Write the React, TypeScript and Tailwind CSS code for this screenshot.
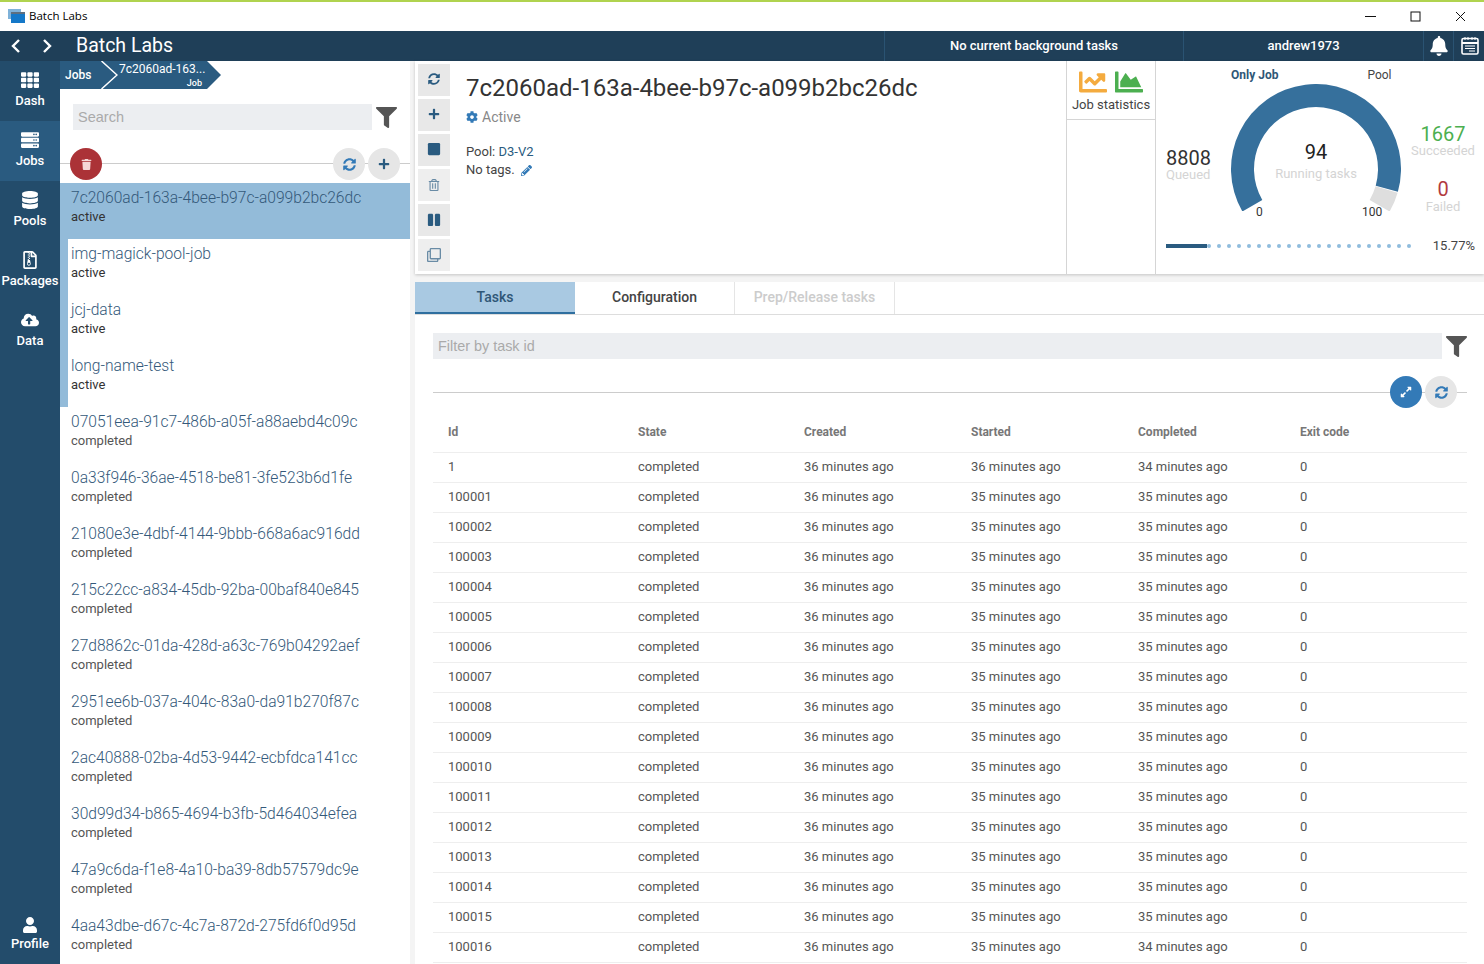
import React from 'react';
import {
  FaBell, FaChartArea, FaChartLine, FaCloudUploadAlt, FaCog, FaDatabase, FaExpandAlt,
  FaFilter, FaPause, FaPencilAlt, FaPlus, FaRegClone, FaRegFileArchive, FaRegTrashAlt, FaServer, FaStop, FaSyncAlt,
  FaTh, FaTrash, FaUser,
} from 'react-icons/fa';

const navItems = [
  { label: 'Dash', icon: FaTh },
  { label: 'Jobs', icon: FaServer, active: true },
  { label: 'Pools', icon: FaDatabase },
  { label: 'Packages', icon: FaRegFileArchive },
  { label: 'Data', icon: FaCloudUploadAlt },
];

const jobs = [
  { id: '7c2060ad-163a-4bee-b97c-a099b2bc26dc', state: 'active' },
  { id: 'img-magick-pool-job', state: 'active' },
  { id: 'jcj-data', state: 'active' },
  { id: 'long-name-test', state: 'active' },
  { id: '07051eea-91c7-486b-a05f-a88aebd4c09c', state: 'completed' },
  { id: '0a33f946-36ae-4518-be81-3fe523b6d1fe', state: 'completed' },
  { id: '21080e3e-4dbf-4144-9bbb-668a6ac916dd', state: 'completed' },
  { id: '215c22cc-a834-45db-92ba-00baf840e845', state: 'completed' },
  { id: '27d8862c-01da-428d-a63c-769b04292aef', state: 'completed' },
  { id: '2951ee6b-037a-404c-83a0-da91b270f87c', state: 'completed' },
  { id: '2ac40888-02ba-4d53-9442-ecbfdca141cc', state: 'completed' },
  { id: '30d99d34-b865-4694-b3fb-5d464034efea', state: 'completed' },
  { id: '47a9c6da-f1e8-4a10-ba39-8db57579dc9e', state: 'completed' },
  { id: '4aa43dbe-d67c-4c7a-872d-275fd6f0d95d', state: 'completed' },
];

const tasks = ['1', ...Array.from({ length: 16 }, (_, i) => String(100001 + i))].map((id) => ({
  id,
  started: id === '1' ? '36 minutes ago' : '35 minutes ago',
  completed: id === '1' || id === '100016' ? '34 minutes ago' : '35 minutes ago',
}));

const actions = [
  { icon: FaSyncAlt, size: 'text-[12px] pb-[2px]' },
  { icon: FaPlus, size: 'text-[12px] pb-[2px]' },
  { icon: FaStop, size: 'text-[14px] pb-[2px]' },
  { icon: FaRegTrashAlt, size: 'text-[12px] opacity-70' },
  { icon: FaPause, size: 'text-[14px]' },
  { icon: FaRegClone, size: 'text-[14px] opacity-70' },
];

// point on the gauge, angle in degrees clockwise from the left end of the horizontal axis
const polar = (deg: number, r: number) => {
  const a = (deg * Math.PI) / 180;
  return `${(85 - r * Math.cos(a)).toFixed(2)} ${(85 - r * Math.sin(a)).toFixed(2)}`;
};

const arc = (from: number, to: number) => {
  const large = to - from > 180 ? 1 : 0;
  return `M${polar(from, 85)} A85 85 0 ${large} 1 ${polar(to, 85)} L${polar(to, 62)} A62 62 0 ${large} 0 ${polar(from, 62)} Z`;
};

const NotesIcon = () => (
  <svg width="20" height="20" viewBox="0 0 20 20" fill="none">
    <rect x="2" y="2.5" width="16" height="15.5" rx="1.5" stroke="white" strokeWidth="1.6" />
    <path d="M2 7h16" stroke="white" strokeWidth="2" />
    <path d="M5 1v3M8 1v3M12 1v3M15 1v3" stroke="white" strokeWidth="1" />
    <path d="M5 10h10M5 12.5h10M9 15h6" stroke="white" strokeWidth="1.2" />
  </svg>
);

const AppIcon = () => (
  <svg width="17" height="15" viewBox="0 0 17 15">
    <rect x="0" y="0" width="13" height="10" fill="#7fb2d9" />
    <rect x="3" y="3" width="14" height="11" fill="#1578c8" />
    <rect x="3" y="3" width="14" height="2" fill="#5d6f80" />
  </svg>
);

const TitleBar = () => (
  <div className="flex h-[31px] shrink-0 items-center border-t-2 border-[#b0d34f] bg-white pl-2">
    <AppIcon />
    <span className="mb-[2px] ml-1 font-['Open_Sans',sans-serif] text-[11.5px] text-black">Batch Labs</span>
    <div className="ml-auto flex h-full items-center pr-[1px]">
      <button className="flex w-[45px] justify-center">
        <svg width="11" height="11" viewBox="0 0 11 11"><path d="M0 5.5h11" stroke="#111" /></svg>
      </button>
      <button className="flex w-[45px] justify-center">
        <svg width="11" height="11" viewBox="0 0 11 11"><rect x="1" y="1" width="9" height="9" fill="none" stroke="#111" /></svg>
      </button>
      <button className="flex w-[45px] justify-center">
        <svg width="11" height="11" viewBox="0 0 11 11"><path d="M1 1l9 9M10 1l-9 9" stroke="#111" /></svg>
      </button>
    </div>
  </div>
);

const HeaderBar = () => (
  <div className="flex h-[30px] shrink-0 items-center bg-[#1f3f58] text-white">
    <div className="flex w-[76px] items-center gap-[23px] pl-[11px]">
      <svg width="9" height="14" viewBox="0 0 9 14"><path d="M8 1L2 7l6 6" fill="none" stroke="white" strokeWidth="2.4" /></svg>
      <svg width="9" height="14" viewBox="0 0 9 14"><path d="M1 1l6 6-6 6" fill="none" stroke="white" strokeWidth="2.4" /></svg>
    </div>
    <span className="w-[808px] text-[19.5px]">Batch Labs</span>
    <div className="flex h-full w-[300px] items-center justify-center border-x border-[#2a5372] text-[13px] font-medium">
      No current background tasks
    </div>
    <div className="flex h-full w-[240px] items-center justify-center border-r border-[#2a5372] text-[13px] font-medium">
      andrew1973
    </div>
    <div className="flex h-full w-[30px] items-center justify-center border-r border-[#2a5372]">
      <FaBell className="text-[20px]" />
    </div>
    <div className="flex flex-1 items-center justify-center pl-[2px]">
      <NotesIcon />
    </div>
  </div>
);

const SideNav = () => (
  <nav className="flex w-[60px] shrink-0 flex-col bg-[#234c6b] text-white">
    {navItems.map(({ label, icon: Icon, active }) => (
      <div
        key={label}
        className={`flex h-[60px] flex-col items-center pt-[10px] ${active ? 'bg-[#2a5b80]' : ''}`}
      >
        <Icon className="text-[18px]" />
        <span className="mt-[3px] text-[13px] font-medium leading-[18px]">{label}</span>
      </div>
    ))}
    <div className="mt-auto flex h-[47px] flex-col items-center">
      <FaUser className="text-[16px]" />
      <span className="mt-[2px] text-[13px] font-medium leading-[18px]">Profile</span>
    </div>
  </nav>
);

const Breadcrumb = () => (
  <div className="flex h-[28px] w-[161px] shrink-0 items-stretch bg-[#2a5b80] text-white [clip-path:polygon(0_0,147px_0,161px_14px,147px_28px,0_28px)]">
    <span className="flex w-[41px] items-center pl-[5px] text-xs font-medium">Jobs</span>
    <svg width="17" height="28" viewBox="0 0 17 28" className="shrink-0">
      <path d="M0.5 0L16 14L0.5 28" fill="none" stroke="white" strokeWidth="1.5" />
    </svg>
    <div className="flex w-[86px] flex-col pt-[1px]">
      <span className="whitespace-nowrap pl-[1px] text-xs leading-[14px]">7c2060ad-163...</span>
      <span className="pr-[2px] text-right text-[9px] font-medium leading-[14px]">Job</span>
    </div>
  </div>
);

const JobList = () => (
  <section className="flex w-[350px] shrink-0 flex-col overflow-hidden bg-white">
    <Breadcrumb />
    <div className="mt-[15px] flex items-center pl-[13px]">
      <div className="flex h-[26px] w-[299px] items-center bg-[#eceef1] pl-[5px] pt-[1px] font-['Liberation_Sans',sans-serif] text-[14.5px] text-[#aaa]">Search</div>
      <FaFilter className="ml-[4px] text-[21px] text-[#555]" />
    </div>
    <div className="relative mt-[16px] flex h-[36px] shrink-0 items-center pl-[10px] pr-[10px]">
      <div className="absolute inset-x-0 top-[17px] h-px bg-[#ccc]" />
      <button className="relative flex h-8 w-8 items-center justify-center rounded-full bg-[#ab3237] text-[11px] text-[#f5d8d8]">
        <FaTrash />
      </button>
      <button className="relative ml-auto flex h-8 w-8 items-center justify-center rounded-full bg-[#e6e6e6] text-[13px] text-[#337ab7]">
        <FaSyncAlt />
      </button>
      <button className="relative ml-[3px] flex h-8 w-8 items-center justify-center rounded-full bg-[#e6e6e6] text-[12px] text-[#2a5b80]">
        <FaPlus />
      </button>
    </div>
    <div className="mt-[1px]">
      {jobs.map((job, i) => (
        <div
          key={job.id}
          className={`h-[56px] border-l-[8px] pl-[3px] pt-[6px] ${job.state === 'active' ? 'border-[#93bbd9]' : 'border-transparent'} ${i === 0 ? 'bg-[#93bbd9]' : ''}`}
        >
          <div className="text-[15.6px] font-light leading-[19px] text-[#34597a]">{job.id}</div>
          <div className={`text-[13px] leading-[18px] ${job.state === 'active' ? 'text-[#333]' : 'text-[#555]'}`}>{job.state}</div>
        </div>
      ))}
    </div>
  </section>
);

const Gauge = () => (
  <div className="relative h-[127px] w-[170px]">
    <svg width="170" height="127" viewBox="0 0 170 127" className="absolute left-0 top-0">
      <path d={arc(-30, 195.6)} fill="#36709c" />
      <path d={arc(196.2, 210)} fill="#dedede" />
    </svg>
    <div className="absolute inset-x-0 top-[56px] text-center text-xl leading-6 text-[#222]">94</div>
    <div className="absolute inset-x-0 top-[82px] text-center text-[13px] leading-4 text-[#d4d4d4]">Running tasks</div>
    <div className="absolute left-[25px] top-[120px] text-xs leading-4 text-[#333]">0</div>
    <div className="absolute left-[131px] top-[120px] text-xs leading-4 text-[#333]">100</div>
  </div>
);

const Stats = () => (
  <div className="flex w-[328px] shrink-0 flex-col pl-[10px] pr-[9px]">
    <div className="flex h-[23px] items-center pt-[4px] text-xs">
      <span className="ml-[65px] font-bold text-[#2f5777]">Only Job</span>
      <span className="ml-[89px] text-[#444]">Pool</span>
    </div>
    <div className="flex">
      <div className="flex w-[65px] flex-col pt-[65px]">
        <span className="text-xl leading-[18px] text-[#333]">8808</span>
        <span className="text-[13px] leading-[15px] text-[#d4d4d4]">Queued</span>
      </div>
      <Gauge />
      <div className="flex flex-1 flex-col items-center pl-[10px] pt-[41px] text-[13px]">
        <span className="text-xl leading-[18px] text-[#4caf50]">1667</span>
        <span className="leading-[15px] text-[#d4d4d4]">Succeeded</span>
        <span className="mt-[22px] text-xl leading-[18px] text-[#b23b3f]">0</span>
        <span className="mt-[1px] leading-[15px] text-[#d4d4d4]">Failed</span>
      </div>
    </div>
    <div className="mt-[22px] flex items-center">
      <div className="h-1 w-[41px] bg-[#2a5b80]" />
      <div className="flex w-[204px] justify-between">
        {Array.from({ length: 21 }, (_, i) => (
          <span key={i} className="h-1 w-1 rounded-full bg-[#8fbcdd]" />
        ))}
      </div>
      <span className="ml-auto text-[13px] text-[#444]">15.77%</span>
    </div>
  </div>
);

const JobDetails = () => (
  <div className="flex h-[213px] shrink-0 bg-white shadow-[0_1px_3px_rgba(0,0,0,0.2)]">
    <div className="flex w-[35px] shrink-0 flex-col gap-[3px] pl-[3px] pt-[3px]">
      {actions.map(({ icon: Icon, size }, i) => (
        <button key={i} className={`flex h-8 w-8 items-center justify-center bg-[#e8e8e8] text-[#2a5b80] ${size}`}>
          <Icon />
        </button>
      ))}
    </div>
    <div className="w-[616px] shrink-0 pl-[16px] pt-[11px]">
      <h1 className="text-2xl leading-[32px] text-[#333]">7c2060ad-163a-4bee-b97c-a099b2bc26dc</h1>
      <div className="mt-[3px] flex items-center text-sm leading-5 text-[#888]">
        <FaCog className="mr-1 text-xs text-[#337ab7]" />
        Active
      </div>
      <div className="mt-[16px] text-[13px] leading-[18px] text-[#444]">
        Pool: <span className="text-[#2a5b80]">D3-V2</span>
      </div>
      <div className="flex items-center text-[13px] leading-[18px] text-[#444]">
        No tags.
        <FaPencilAlt className="ml-[6px] text-[11px] text-[#337ab7]" />
      </div>
    </div>
    <div className="w-[90px] shrink-0 border-x border-[#d5d5d5]">
      <div className="flex h-[59px] flex-col items-center border-b border-[#d5d5d5] pt-[7px]">
        <div className="flex gap-[8px] text-[28px] leading-none">
          <FaChartLine className="text-[#f4ab3f]" />
          <FaChartArea className="text-[#4caf50]" />
        </div>
        <span className="mt-[1px] text-[13px] leading-4 text-[#444]">Job statistics</span>
      </div>
    </div>
    <Stats />
  </div>
);

const Tabs = () => (
  <div className="flex h-[33px] shrink-0 border-b border-[#ddd] bg-white text-sm font-medium">
    <div className="flex w-[160px] items-center justify-center border-b-2 border-[#2f6f9f] bg-[#a9c9e2] text-[#2f5777]">Tasks</div>
    <div className="flex w-[160px] items-center justify-center border-r border-[#e5e5e5] pb-[2px] text-[#444]">Configuration</div>
    <div className="flex w-[160px] items-center justify-center border-r border-[#e5e5e5] pb-[2px] text-[#ccc]">Prep/Release tasks</div>
  </div>
);

const rowClass = 'grid grid-cols-[190px_166px_167px_167px_162px_167px] pl-[15px] border-b border-[#eee]';

const TaskTable = () => (
  <div className="flex-1 overflow-hidden bg-white pl-[18px] pr-[17px]">
    <div className="mt-[18px] flex items-center">
      <div className="flex h-[26px] w-[1009px] items-center bg-[#eceef1] pl-[5px] pt-[1px] font-['Liberation_Sans',sans-serif] text-[14.4px] text-[#aaa]">Filter by task id</div>
      <FaFilter className="ml-[4px] text-[21px] text-[#555]" />
    </div>
    <div className="relative mt-[17px] flex h-8 items-center justify-end gap-[3px] pr-[10px]">
      <div className="absolute inset-x-0 top-[16px] h-px bg-[#ccc]" />
      <button className="relative flex h-8 w-8 items-center justify-center rounded-full bg-[#337ab7] text-xs text-white">
        <FaExpandAlt />
      </button>
      <button className="relative flex h-8 w-8 items-center justify-center rounded-full bg-[#e6e6e6] text-[13px] text-[#337ab7]">
        <FaSyncAlt />
      </button>
    </div>
    <div className={`${rowClass} h-[45px] items-center pt-[3px] text-xs font-bold text-[#777]`}>
      <span>Id</span>
      <span>State</span>
      <span>Created</span>
      <span>Started</span>
      <span>Completed</span>
      <span>Exit code</span>
    </div>
    {tasks.map((t) => (
      <div key={t.id} className={`${rowClass} h-[30px] items-center pb-[2px] text-[13px] text-[#555]`}>
        <span>{t.id}</span>
        <span>completed</span>
        <span>36 minutes ago</span>
        <span>{t.started}</span>
        <span>{t.completed}</span>
        <span>0</span>
      </div>
    ))}
  </div>
);

export default function App() {
  return (
    <div className="flex h-screen w-full flex-col overflow-hidden font-['Roboto',sans-serif]">
      <TitleBar />
      <HeaderBar />
      <div className="flex min-h-0 flex-1">
        <SideNav />
        <JobList />
        <main className="flex min-w-0 flex-1 flex-col bg-[#f4f4f4] pl-[5px]">
          <JobDetails />
          <div className="h-[8px] shrink-0" />
          <Tabs />
          <TaskTable />
        </main>
      </div>
    </div>
  );
}
